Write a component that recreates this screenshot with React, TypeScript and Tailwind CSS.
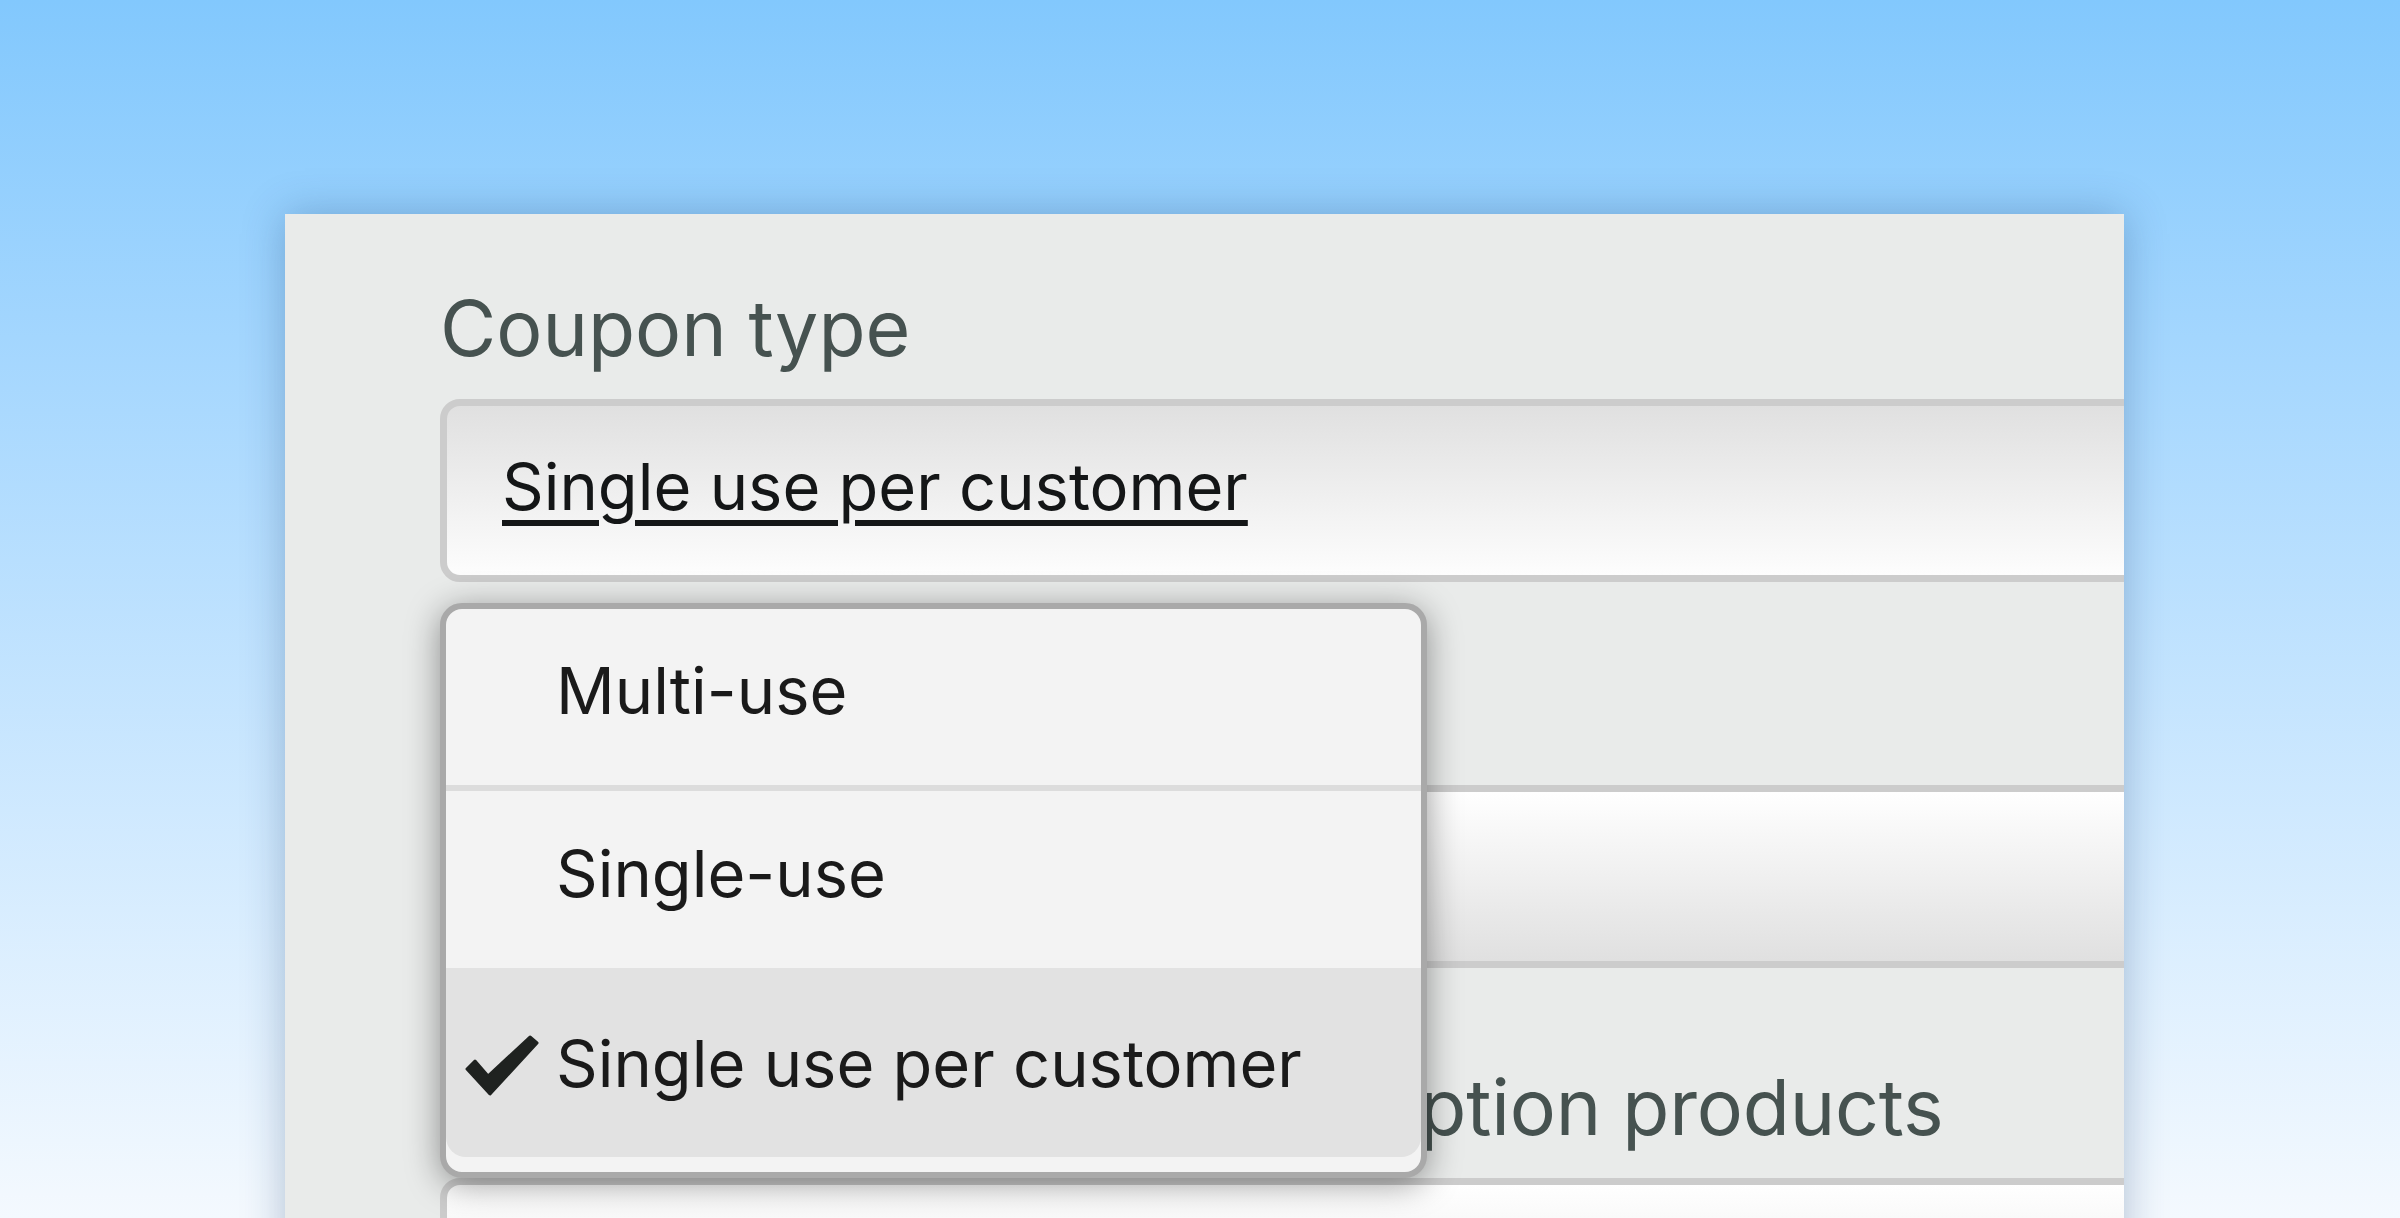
import React from 'react';

const font = { fontFamily: 'Inter, "Open Sans", sans-serif' };

function CheckIcon() {
  return (
    <svg width="80" height="70" viewBox="0 0 80 70" className="absolute left-[16px] top-[64px]">
      <path
        d="M5 37 L13 29 L26 44 L68 5 L75 11 L28 62 Z"
        fill="#1f2220"
        stroke="#1f2220"
        strokeWidth="3"
        strokeLinejoin="round"
      />
    </svg>
  );
}

export default function App() {
  return (
    <div
      className="w-[2400px] h-[1218px] overflow-hidden bg-gradient-to-b from-[#82c8fd] to-[#f4f9fe]"
      style={font}
    >
      <div className="relative ml-[285px] mt-[214px] w-[1839px] h-[1100px] overflow-hidden bg-[#e9ebea] shadow-[0_0_40px_rgba(20,60,110,0.3)]">
        <div className="flex flex-col pl-[155px] pt-[76px]">
          {/* Coupon type */}
          <label className="block text-[77px] leading-[77px] text-[#465250]">
            Coupon type
          </label>
          <div className="mt-[32px] h-[183px] w-[1800px] rounded-[20px] border-[7px] border-[#cccccc] bg-gradient-to-b from-[#e0e0e0] to-[#fdfdfd] pl-[55px] pt-[48px]">
            <span className="text-[65px] leading-[65px] text-[#141617] underline decoration-[6px] underline-offset-[10px]">
              Single use per customer
            </span>
          </div>

          {/* second field, its label sits under the open menu */}
          <div className="mt-[203px] h-[183px] w-[1800px] rounded-[20px] border-[7px] border-[#cccccc] bg-gradient-to-b from-[#ffffff] to-[#e0e0e0]" />

          {/* Products */}
          <label className="block mt-[101px] text-[77px] leading-[77px] text-[#465250] tracking-[-0.2px]">
            Enable coupons on subscription products
          </label>
          <div className="mt-[32px] h-[183px] w-[1800px] rounded-[20px] border-[7px] border-[#cccccc] bg-gradient-to-b from-[#ffffff] to-[#e4e4e4]" />
        </div>

        {/* Open dropdown menu */}
        <div className="absolute left-[155px] top-[389px] w-[987px] rounded-[22px] border-[6px] border-[#a9a9a9] bg-[#f3f3f3] pb-[15px] shadow-[0_6px_34px_rgba(0,0,0,0.4)] text-[65px] leading-[65px] text-[#1a1a1a]">
          <div className="h-[176px] pl-[110px] pt-[49px]">Multi-use</div>
          <div className="h-[6px] bg-[#dcdcdc]" />
          <div className="h-[177px] pl-[110px] pt-[50px]">Single-use</div>
          <div className="relative h-[189px] rounded-b-[20px] bg-[#e2e2e2] pl-[110px] pt-[63px]">
            <CheckIcon />
            Single use per customer
          </div>
        </div>
      </div>
    </div>
  );
}
